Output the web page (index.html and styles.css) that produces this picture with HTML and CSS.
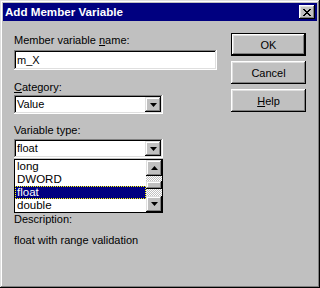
FILE: index.html
```html
<!DOCTYPE html>
<html>
<head>
<meta charset="utf-8">
<link rel="stylesheet" href="styles.css">
</head>
<body>
<div class="window">
  <div class="titlebar">
    <span class="title">Add Member Variable</span>
    <span class="close"><svg width="8" height="7" viewBox="0 0 8 7"><path d="M0 0h2v1h1v1h2v-1h1v-1h2v1h-1v1h-1v1h-1v1h1v1h1v1h1v1h-2v-1h-1v-1h-2v1h-1v1h-2v-1h1v-1h1v-1h1v-1h-1v-1h-1v-1h-1z" fill="#000"/></svg></span>
  </div>
  <div class="body">
    <div class="left">
      <div class="lbl">Member variable <u>n</u>ame:</div>
      <div class="field sunken">m_X</div>
      <div class="lbl l2"><u>C</u>ategory:</div>
      <div class="combo sunken">
        <span class="val">Value</span>
        <span class="ddbtn raised"><svg width="7" height="4" viewBox="0 0 7 4"><path d="M0 0h7l-3.5 4z" fill="#000"/></svg></span>
      </div>
      <div class="lbl l3">Variable type:</div>
      <div class="combowrap">
        <div class="combo sunken">
          <span class="val">float</span>
          <span class="ddbtn raised"><svg width="7" height="4" viewBox="0 0 7 4"><path d="M0 0h7l-3.5 4z" fill="#000"/></svg></span>
        </div>
        <div class="droplist">
          <div class="items">
            <div class="item">long</div>
            <div class="item">DWORD</div>
            <div class="item sel">float</div>
            <div class="item">double</div>
          </div>
          <div class="sbar">
            <span class="sbtn raised"><svg width="7" height="4" viewBox="0 0 7 4"><path d="M3.5 0l3.5 4h-7z" fill="#000"/></svg></span>
            <span class="track t1"></span>
            <span class="thumb raised"></span>
            <span class="track t2"></span>
            <span class="sbtn raised"><svg width="7" height="4" viewBox="0 0 7 4"><path d="M0 0h7l-3.5 4z" fill="#000"/></svg></span>
          </div>
        </div>
      </div>
      <div class="lbl l4">Description:</div>
      <div class="lbl l5">float with range validation</div>
    </div>
    <div class="right">
      <div class="btn default">OK</div>
      <div class="btn">Cancel</div>
      <div class="btn"><u>H</u>elp</div>
    </div>
  </div>
</div>
</body>
</html>
```
FILE: styles.css
```css
* { box-sizing: border-box; }
html, body { margin: 0; padding: 0; }
body {
  width: 320px;
  height: 288px;
  font-family: "Liberation Sans", Arial, sans-serif;
  font-size: 11px;
  color: #000;
  background: #c0c0c0;
}
.window {
  width: 320px;
  height: 288px;
  background: #c0c0c0;
  padding: 3px;
  box-shadow: inset -1px -1px #000, inset 1px 1px #dfdfdf, inset -2px -2px #808080, inset 2px 2px #fff;
}
.titlebar {
  height: 18px;
  background: #000080;
  color: #fff;
  display: flex;
  align-items: center;
  justify-content: space-between;
  padding: 0 2px 0 2px;
}
.title {
  font-weight: bold;
  font-size: 11.6px;
  line-height: 18px;
}
.close {
  width: 16px;
  height: 14px;
  background: #c0c0c0;
  display: flex;
  align-items: center;
  justify-content: center;
  box-shadow: inset -1px -1px #000, inset 1px 1px #fff, inset -2px -2px #808080, inset 2px 2px #dfdfdf;
}
.raised {
  background: #c0c0c0;
  box-shadow: inset -1px -1px #000, inset 1px 1px #dfdfdf, inset -2px -2px #808080, inset 2px 2px #fff;
}
.sunken {
  background: #fff;
  box-shadow: inset -1px -1px #fff, inset 1px 1px #808080, inset -2px -2px #dfdfdf, inset 2px 2px #000;
}
.body {
  display: flex;
  align-items: flex-start;
  padding: 12px 10px 0 11px;
}
.left {
  width: 203px;
  margin-top: 1px;
}
.right {
  margin-left: 14px;
  display: flex;
  flex-direction: column;
  gap: 5px;
}
.lbl {
  line-height: 13px;
  height: 13px;
  white-space: nowrap;
  margin-bottom: 3px;
}
.field {
  height: 20px;
  line-height: 20px;
  padding-left: 3px;
}
.l2 { margin-top: 11px; margin-bottom: 1px; }
.l3 { margin-top: 10px; margin-bottom: 2px; }
.l4 { margin-top: 55px; margin-bottom: 8px; }
.combowrap {
  position: relative;
  width: 149px;
}
.combo {
  width: 149px;
  height: 19px;
  display: flex;
  align-items: center;
  justify-content: space-between;
  padding: 2px;
}
.val {
  padding-left: 1px;
  line-height: 15px;
}
.ddbtn {
  width: 16px;
  height: 15px;
  display: flex;
  align-items: center;
  justify-content: center;
}
.droplist {
  position: absolute;
  left: 0;
  top: 20px;
  width: 149px;
  height: 54px;
  border: 1px solid #000;
  background: #fff;
  display: flex;
}
.items {
  flex: 1;
}
.item {
  height: 13px;
  line-height: 13px;
  padding-left: 2px;
  font-size: 11.5px;
}
.item.sel {
  background: #000080;
  color: #fff;
  border: 1px dotted #ffff00;
  padding-left: 1px;
  line-height: 11px;
}
.sbar {
  width: 16px;
  display: flex;
  flex-direction: column;
}
.sbtn {
  height: 16px;
  display: flex;
  align-items: center;
  justify-content: center;
}
.track {
  background: repeating-conic-gradient(#fff 0 25%, #c0c0c0 0 50%) 0 0 / 2px 2px;
}
.t1 { height: 5px; }
.thumb { height: 8px; }
.t2 { height: 7px; }
.btn {
  width: 75px;
  height: 23px;
  display: flex;
  align-items: center;
  justify-content: center;
  background: #c0c0c0;
  box-shadow: inset -1px -1px #000, inset 1px 1px #fff, inset -2px -2px #808080, inset 2px 2px #dfdfdf;
}
.btn.default {
  box-shadow: inset 0 0 0 1px #000, inset -2px -2px #000, inset 2px 2px #fff, inset -3px -3px #808080, inset 3px 3px #dfdfdf;
}
```
